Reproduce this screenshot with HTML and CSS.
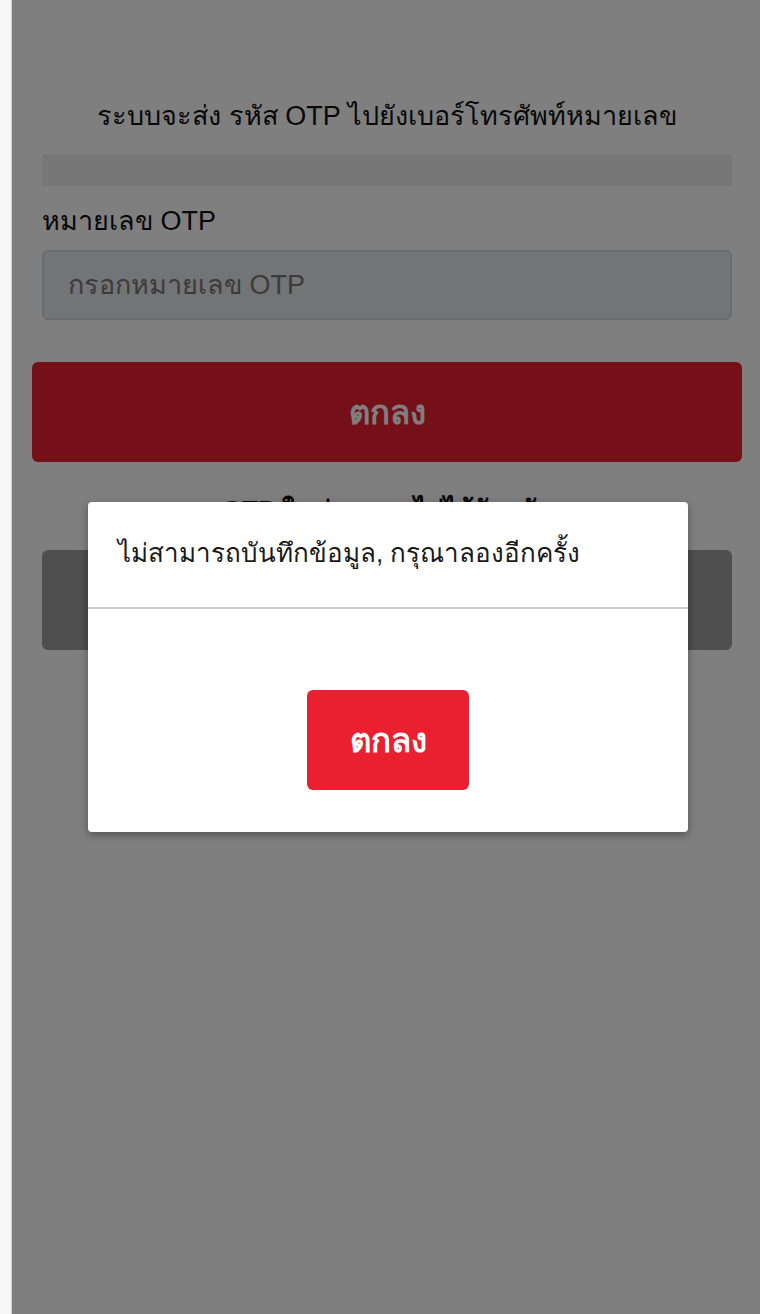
FILE: index.html
```html
<!DOCTYPE html>
<html lang="th">
<head>
<meta charset="utf-8">
<title>OTP</title>
<link rel="stylesheet" href="styles.css">
</head>
<body>
<div class="page">
  <main class="content">
    <p class="intro">ระบบจะส่ง รหัส OTP ไปยังเบอร์โทรศัพท์หมายเลข</p>
    <div class="phone-bar"></div>
    <label class="field-label" for="otp">หมายเลข OTP</label>
    <input class="field-input" id="otp" type="text" placeholder="กรอกหมายเลข OTP">
    <button class="btn-primary" type="button">ตกลง</button>
    <p class="resend-text">OTP ในช่วงเวลาไม่ได้รับรหัส</p>
    <button class="btn-secondary" type="button">ขอรหัส OTP ใหม่</button>
  </main>
  <div class="overlay"></div>
  <div class="modal">
    <div class="modal-header">ไม่สามารถบันทึกข้อมูล, กรุณาลองอีกครั้ง</div>
    <div class="modal-body">
      <button class="modal-btn" type="button">ตกลง</button>
    </div>
  </div>
</div>
</body>
</html>
```

FILE: styles.css
```css
html, body {
  margin: 0;
  padding: 0;
}
body {
  background: #f6f6f6;
  font-family: "Liberation Sans", "Noto Sans", "DejaVu Sans", sans-serif;
  color: #111;
}
.page {
  position: relative;
  margin-left: 11px;
  border-left: 1px solid #d0d0d0;
  background: #fff;
  min-height: 1314px;
}
.content {
  display: flex;
  flex-direction: column;
  padding: 96px 28px 0 30px;
}
.intro {
  margin: 0;
  text-align: center;
  font-size: 27px;
  line-height: 40px;
  color: #111;
}
.phone-bar {
  height: 32px;
  margin-top: 18px;
  background: #eeeeee;
}
.field-label {
  margin-top: 16px;
  font-size: 27px;
  line-height: 38px;
  color: #111;
}
.field-input {
  margin-top: 10px;
  height: 70px;
  box-sizing: border-box;
  border: 2px solid #d4d6d9;
  border-radius: 6px;
  background: #e7e8ea;
  padding: 0 24px;
  font-family: inherit;
  font-size: 27px;
  color: #111;
}
.field-input::placeholder {
  color: #777;
}
.btn-primary {
  margin: 42px -10px 0;
  height: 100px;
  border: none;
  border-radius: 6px;
  background: #ea2032;
  color: #fff;
  font-family: inherit;
  font-weight: bold;
  font-size: 33px;
}
.resend-text {
  margin: 28px 0 0;
  text-align: center;
  font-size: 26px;
  font-weight: bold;
  line-height: 40px;
  color: #111;
}
.btn-secondary {
  margin-top: 20px;
  height: 100px;
  border: none;
  border-radius: 6px;
  background: #9e9e9e;
  color: #fff;
  font-family: inherit;
  font-weight: bold;
  font-size: 30px;
}
.overlay {
  position: absolute;
  inset: 0;
  background: rgba(0, 0, 0, 0.5);
}
.modal {
  position: absolute;
  top: 502px;
  left: 76px;
  width: 600px;
  background: #fff;
  border-radius: 4px;
  box-shadow: 0 3px 8px rgba(0, 0, 0, 0.35);
}
.modal-header {
  height: 107px;
  box-sizing: border-box;
  padding: 31px 30px 0;
  font-size: 26px;
  line-height: 40px;
  color: #1a1a1a;
  border-bottom: 2px solid #cccccc;
}
.modal-body {
  display: flex;
  justify-content: center;
  padding: 81px 0 42px;
}
.modal-btn {
  width: 162px;
  height: 100px;
  border: none;
  border-radius: 6px;
  background: #ea2030;
  color: #fff;
  font-family: inherit;
  font-weight: bold;
  font-size: 33px;
}
```
